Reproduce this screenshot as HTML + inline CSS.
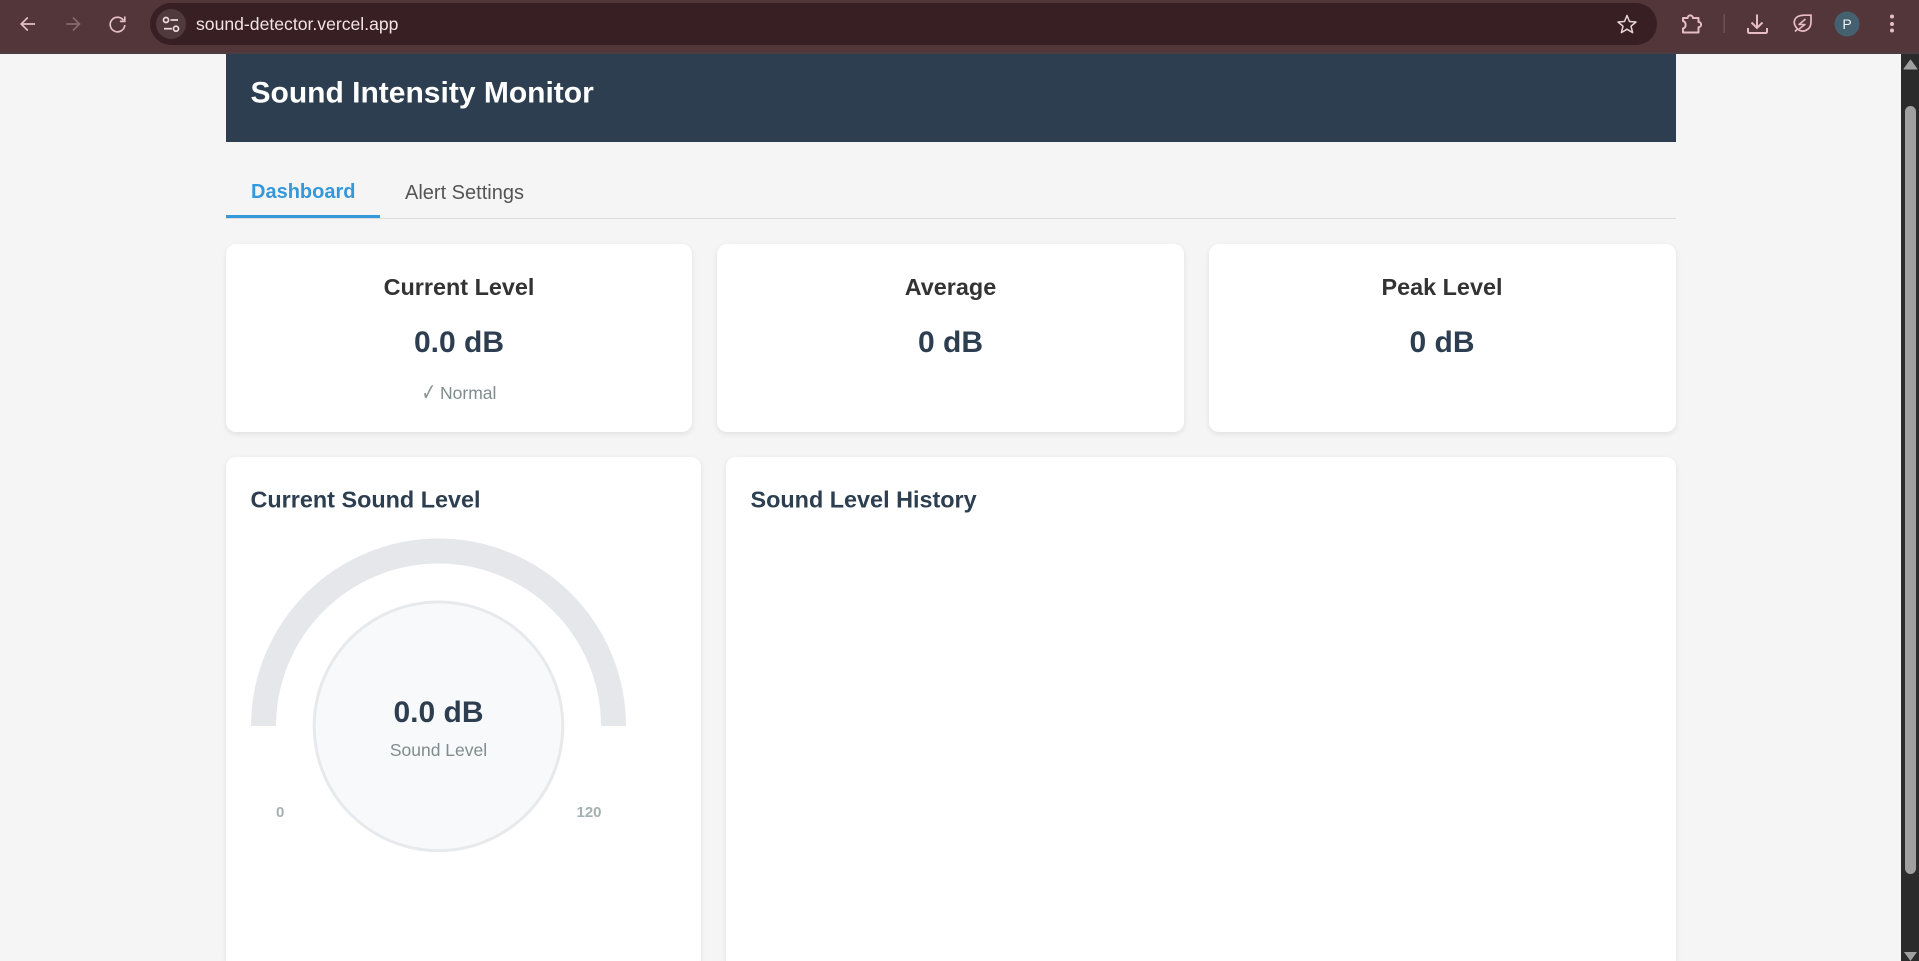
<!DOCTYPE html>
<html lang="en">
<head>
<meta charset="utf-8">
<title>Sound Intensity Monitor</title>
<style>
html,body{margin:0;padding:0;width:1919px;height:961px;overflow:hidden;background:#f5f5f5;font-family:"Liberation Sans",Arial,sans-serif}
.page{position:relative;width:1919px;height:961px;overflow:hidden;background:#f5f5f5}
.a{position:absolute}
.toolbar{left:0;top:0;width:1919px;height:52px;background:#533639;border-bottom:2px solid #4e3d40}
.omni{left:150px;top:3px;width:1507px;height:42px;border-radius:21px;background:#381f24}
.chip{left:156px;top:9px;width:30px;height:30px;border-radius:50%;background:#503a3e}
.header{left:226px;top:54px;width:1450px;height:88px;background:#2c3e50}
.tabline{left:226px;top:218px;width:1450px;height:1px;background:#ddd}
.tabactive{left:226px;top:215px;width:154px;height:3px;background:#3498db}
.card{background:#fff;border-radius:10px;box-shadow:0 2px 6px rgba(0,0,0,.09)}
.card.tall{border-radius:10px 10px 0 0;height:504px}
.sb{left:1901px;top:54px;width:18px;height:907px;background:#2b2b2b}
.thumb{left:1905px;top:106px;width:11px;height:768px;border-radius:6px;background:#a0a0a0}
svg.layer{position:absolute;left:0;top:0;display:block}
</style>
</head>
<body>
<div class="page">
<div class="a toolbar"></div>
<div class="a omni"></div>
<div class="a chip"></div>
<div class="a header"></div>
<div class="a tabline"></div>
<div class="a tabactive"></div>
<div class="a card" style="left:226px;top:244px;width:466px;height:188px"></div>
<div class="a card" style="left:717px;top:244px;width:467px;height:188px"></div>
<div class="a card" style="left:1209px;top:244px;width:466.500px;height:188px"></div>
<div class="a card tall" style="left:226px;top:457px;width:475px"></div>
<div class="a card tall" style="left:726px;top:457px;width:950px"></div>
<div class="a sb"></div>
<div class="a thumb"></div>
<svg class="layer" width="1919" height="961" viewBox="0 0 1919 961" xmlns="http://www.w3.org/2000/svg" font-family="'Liberation Sans',Arial,sans-serif">
  <!-- toolbar icons -->
  <g fill="none" stroke="#e4bfc5" stroke-width="1.7">
    <path d="M35 24H21.800M27.800 17.500L21.200 24L27.800 30.500"/>
    <path d="M79.500 24H66.300M72.900 17.500L79.500 24L72.900 30.500" stroke="#846a6e"/>
    <path d="M123.400 20.200A7.300 7.300 0 1 0 124.800 25"/>
    <path d="M124.800 16.500V21.400H119.900"/>
  </g>
  <g fill="none" stroke="#efdde0" stroke-width="1.7">
    <circle cx="166" cy="20" r="2.500"/><path d="M170.500 20H178"/>
    <path d="M164 28.700H172"/><circle cx="176" cy="28.700" r="2.500"/>
  </g>
  <path d="M1627 15.500L1629.500 21.500L1636 22L1631 26.200L1632.600 32.600L1627 29.200L1621.400 32.600L1623 26.200L1618 22L1624.500 21.500Z" fill="none" stroke="#e6d5d8" stroke-width="1.500" stroke-linejoin="round"/>
  <path d="M1683 18H1687.700A2.600 2.600 0 0 1 1692.900 18H1698.500V22A2.600 2.600 0 0 1 1698.500 27.200V32.500H1683V28.500C1686.500 27.500 1686.500 22 1683 21Z" fill="none" stroke="#e8bcc4" stroke-width="2" stroke-linejoin="round"/>
  <rect x="1723.500" y="14" width="1.500" height="19" fill="#6e4f54"/>
  <g fill="none" stroke="#e8bcc4" stroke-width="2">
    <path d="M1757 14.500V28M1751.500 22.500L1757 28L1762.500 22.500"/>
    <path d="M1748 28V31.500Q1748 33 1749.500 33H1765.500Q1767 33 1767 31.500V28"/>
    <path stroke-width="1.700" d="M1795 31.500L1797.500 29C1791.500 22.500 1794 15.500 1804 15.200H1811V22C1811 30 1803 33.500 1797.500 29"/>
    <path stroke-width="1.500" d="M1805.500 19L1799 24.500H1805L1799 29" stroke-linejoin="round"/>
  </g>
  <circle cx="1847" cy="24" r="12.500" fill="#456170"/>
  <text x="1847" y="29" font-size="14" fill="#f0f4f6" text-anchor="middle">P</text>
  <g fill="#e8bcc4"><circle cx="1892" cy="16.500" r="2"/><circle cx="1892" cy="24" r="2"/><circle cx="1892" cy="30.500" r="2"/></g>
  <text x="196" y="30" font-size="17.600" fill="#f3e3e6">sound-detector.vercel.app</text>

  <!-- scrollbar arrows -->
  <path d="M1910.500 60L1917 69H1904Z" fill="#a0a0a0" stroke="#a0a0a0" stroke-linejoin="round"/>
  <path d="M1904 952H1917L1910.500 961Z" fill="#a0a0a0"/>

  <!-- header & tabs -->
  <text x="250.500" y="102.500" font-size="30" font-weight="700" fill="#fff">Sound Intensity Monitor</text>
  <text x="251" y="198" font-size="20" font-weight="700" fill="#3498db">Dashboard</text>
  <text x="405" y="199" font-size="20" fill="#555">Alert Settings</text>

  <!-- stat cards -->
  <g text-anchor="middle">
    <g font-size="23.400" font-weight="700" fill="#333">
      <text x="459" y="295">Current Level</text>
      <text x="950.500" y="295">Average</text>
      <text x="1442" y="295">Peak Level</text>
    </g>
    <g font-size="30" font-weight="700" fill="#2c3e50">
      <text x="459" y="352">0.0 dB</text>
      <text x="950.500" y="352">0 dB</text>
      <text x="1442" y="352">0 dB</text>
    </g>
  </g>
  <text transform="translate(421.500 400.500) scale(1 1.400)" font-size="17.500" fill="#8a9698" font-family="'DejaVu Sans',sans-serif">✓</text>
  <text x="440" y="399" font-size="17.500" fill="#7f8c8d">Normal</text>

  <!-- panels -->
  <text x="250.500" y="507.500" font-size="23.400" font-weight="700" fill="#2c3e50">Current Sound Level</text>
  <text x="750.500" y="507.500" font-size="23.400" font-weight="700" fill="#2c3e50">Sound Level History</text>

  <!-- gauge -->
  <path d="M263.500 726A175 175 0 0 1 613.500 726" fill="none" stroke="#e5e7eb" stroke-width="25"/>
  <circle cx="438.500" cy="726.300" r="124.300" fill="#f8f9fa" stroke="#e7e9ec" stroke-width="3"/>
  <text x="438.500" y="722" font-size="30" font-weight="700" fill="#2c3e50" text-anchor="middle">0.0 dB</text>
  <text x="438.500" y="756" font-size="17.500" fill="#7f8c8d" text-anchor="middle">Sound Level</text>
  <text x="276" y="817" font-size="15" font-weight="700" fill="#a3b1b2">0</text>
  <text x="576.500" y="817" font-size="15" font-weight="700" fill="#a3b1b2">120</text>
</svg>
</div>
</body>
</html>
